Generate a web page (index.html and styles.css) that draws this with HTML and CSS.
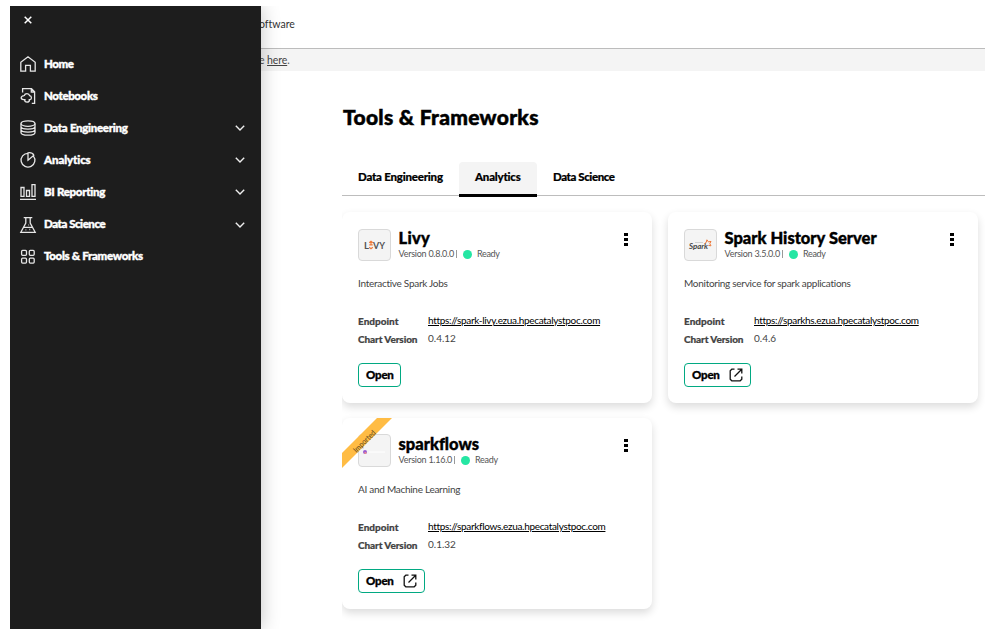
FILE: index.html
```html
<!DOCTYPE html>
<html lang="en">
<head>
<meta charset="utf-8">
<title>Tools &amp; Frameworks</title>
<link rel="stylesheet" href="styles.css">
</head>
<body>
<svg width="0" height="0" class="defs">
  <symbol id="chev" viewBox="0 0 10 6"><path d="M.8 .8L5 5 9.2 .8"/></symbol>
  <symbol id="ext" viewBox="0 0 14 14"><path d="M5.5 1.2H2.8L1.2 2.8V11.2L2.8 12.8H11.2L12.8 11.2V8.5M8.5 1.2h4.3v4.3M12.5 1.5L5.5 8.5"/></symbol>
</svg>
<div class="frame">
  <nav class="sidebar">
    <div class="close"><svg width="8" height="8" viewBox="0 0 8 8"><path d="M.7 .7l6.6 6.6M7.3 .7L.7 7.3"/></svg></div>
    <ul class="menu">
      <li><svg class="ico" viewBox="0 0 16 16"><path d="M.8 6.2L8 .8l7.2 5.4V15.2H10.4V9.4H5.6V15.2H.8z"/></svg><span class="m-home">Home</span></li>
      <li><svg class="ico" viewBox="0 0 16 16"><path d="M2.6 4.5V.7H11.5L14.6 3.8V15.3H11.8M11.3 .7V4H14.6M4.2 7.7C5 5 9 5 9.6 7.7C12 8 12 11.4 9.8 11.6H8.6M5.6 11.6H3.6C.4 11.4.2 8.2 4.2 7.7M4.6 11.6C4.6 15 9.4 15 9.6 11.6"/></svg><span class="m-note">Notebooks</span></li>
      <li><svg class="ico" viewBox="0 0 16 16"><ellipse cx="8" cy="3.6" rx="7" ry="2.7"/><path d="M1 3.6V12.4C1 16 15 16 15 12.4V3.6M1 6.6C1 10 15 10 15 6.6M1 9.6C1 13 15 13 15 9.6"/></svg><span class="m-eng">Data Engineering</span><svg class="chev"><use href="#chev"/></svg></li>
      <li><svg class="ico" viewBox="0 0 16 16"><path d="M8 1.3A6.9 6.9 0 1 0 13.3 3.8L8 8.2z M8 1.3V.8C10.5 .4 13 1.6 13.9 3.2L8 8.2"/></svg><span class="m-ana">Analytics</span><svg class="chev"><use href="#chev"/></svg></li>
      <li><svg class="ico" viewBox="0 0 16 16"><path d="M0 15.3H16M1 3.5H4V12.4H1zM6.5 6.5H9.5V12.4H6.5zM12 .7H15V12.4H12z"/></svg><span class="m-bi">BI Reporting</span><svg class="chev"><use href="#chev"/></svg></li>
      <li><svg class="ico" viewBox="0 0 16 16"><path d="M3.7 .7H12.3M5.8 .7V6L.8 15.3H15.2L10.2 6V.7M3.4 10.3H12.4M5.5 12.9h.8M9.4 12.5h.8M8.5 8h.6"/></svg><span class="m-sci">Data Science</span><svg class="chev"><use href="#chev"/></svg></li>
      <li><svg class="ico" viewBox="0 0 16 16"><rect x="1.6" y="1.4" width="4.9" height="4.9" rx="1"/><rect x="9.3" y="1.4" width="4.9" height="4.9" rx="1"/><rect x="1.6" y="9.2" width="4.9" height="4.9" rx="1"/><rect x="9.3" y="9.2" width="4.9" height="4.9" rx="1"/></svg><span class="m-tools">Tools &amp; Frameworks</span></li>
    </ul>
  </nav>
  <main class="main">
    <header class="topbar"><span>oftware</span></header>
    <div class="notice"><span>e <a>here</a>.</span></div>
    <div class="content">
      <h1>Tools &amp; Frameworks</h1>
      <div class="tabs">
        <div class="tab t1"><span>Data Engineering</span></div>
        <div class="tab active"><span>Analytics</span></div>
        <div class="tab t3"><span>Data Science</span></div>
      </div>
      <div class="cards">
        <section class="card">
          <div class="head">
            <div class="logo"><svg width="30" height="30" viewBox="0 0 30 30"><text class="livy" x="5" y="19" textLength="5" lengthAdjust="spacingAndGlyphs">L</text><text class="livy" x="14" y="19" textLength="12" lengthAdjust="spacingAndGlyphs">VY</text><path class="orange" d="M10.2 12.8L12 11.3l1.8 1.5M12 11.5v3M10.2 17.2L12 18.7l1.8-1.5M10.3 14.8h3.4"/></svg></div>
            <div class="title"><h2 class="h-livy">Livy</h2><div class="meta"><span class="ver v1">Version 0.8.0.0</span><i class="bar"></i><i class="dot"></i><span class="ready">Ready</span></div></div>
            <svg class="more" viewBox="0 0 4 13"><path d="M0 0h4v3H0zM0 5h4v3H0zM0 10h4v3H0z"/></svg>
          </div>
          <p class="desc d1">Interactive Spark Jobs</p>
          <dl><dt class="ep">Endpoint</dt><dd><a class="u1">https://spark-livy.ezua.hpecatalystpoc.com</a></dd><dt class="cv">Chart Version</dt><dd>0.4.12</dd></dl>
          <div class="open"><span>Open</span></div>
        </section>
        <section class="card">
          <div class="head">
            <div class="logo"><svg width="30" height="30" viewBox="0 0 30 30"><text class="spark" x="4" y="19" textLength="19" lengthAdjust="spacingAndGlyphs">Spark</text><path class="orange thin" d="M19.5 13.5l1.7-1 .7-2.7 1.5 2.1 2.6-.5-1.2 2.3 1.2 2.1-2.6-.4"/><path class="faint" d="M10 12.5h8"/></svg></div>
            <div class="title"><h2 class="h-spark">Spark History Server</h2><div class="meta"><span class="ver v1">Version 3.5.0.0</span><i class="bar"></i><i class="dot"></i><span class="ready">Ready</span></div></div>
            <svg class="more" viewBox="0 0 4 13"><path d="M0 0h4v3H0zM0 5h4v3H0zM0 10h4v3H0z"/></svg>
          </div>
          <p class="desc d2">Monitoring service for spark applications</p>
          <dl><dt class="ep">Endpoint</dt><dd><a class="u2">https://sparkhs.ezua.hpecatalystpoc.com</a></dd><dt class="cv">Chart Version</dt><dd>0.4.6</dd></dl>
          <div class="open wide"><span>Open</span><svg><use href="#ext"/></svg></div>
        </section>
        <section class="card third">
          <div class="head">
            <div class="logo"><svg width="30" height="30" viewBox="0 0 30 30"><circle cx="6" cy="17" r="2" fill="#9a5bd0"/><circle cx="6.4" cy="18" r="1.1" fill="#f08a90"/><path d="M10 17h16" stroke="#fff"/></svg></div>
            <div class="title"><h2 class="h-flows">sparkflows</h2><div class="meta"><span class="ver v3">Version 1.16.0</span><i class="bar"></i><i class="dot"></i><span class="ready">Ready</span></div></div>
            <svg class="more" viewBox="0 0 4 13"><path d="M0 0h4v3H0zM0 5h4v3H0zM0 10h4v3H0z"/></svg>
          </div>
          <svg class="ribbon" viewBox="0 0 50 50"><path d="M35 0H50L0 50V35z"/><text x="22" y="26.3" text-anchor="middle" textLength="28" lengthAdjust="spacingAndGlyphs" transform="rotate(-45 22 23)">Imported</text></svg>
          <p class="desc d3">AI and Machine Learning</p>
          <dl><dt class="ep">Endpoint</dt><dd><a class="u3">https://sparkflows.ezua.hpecatalystpoc.com</a></dd><dt class="cv">Chart Version</dt><dd>0.1.32</dd></dl>
          <div class="open wide"><span>Open</span><svg><use href="#ext"/></svg></div>
        </section>
      </div>
    </div>
  </main>
</div>
</body>
</html>
```
FILE: styles.css
```css
* { box-sizing: border-box; margin: 0; padding: 0; }
body { background: #fff; font-family: Lato, "Liberation Sans", sans-serif; font-variant-ligatures: none; overflow: hidden; }
.defs { display: block; height: 0; }
svg { display: block; fill: none; overflow: visible; }
.frame { margin: 6px 0 0 10px; width: 975px; height: 623px; display: grid; grid-template-columns: 251px 724px; overflow: hidden; }

.sidebar { background: #1d1d1d; color: #fff; box-shadow: 0 0 18px rgba(0,0,0,.24); position: relative; z-index: 2; }
.close { height: 42px; padding: 10px 0 0 14px; }
.close svg { stroke: #fff; stroke-width: 1.5; }
.menu { list-style: none; }
.menu li { height: 32.1px; display: flex; align-items: center; padding: 0 16px 0 10px; font-size: 11.5px; font-weight: 900; white-space: nowrap; }
.menu li span { margin-left: 8px; padding-bottom: 2px; letter-spacing: -.3px; -webkit-text-stroke: .4px #fff; }
.menu .m-home { letter-spacing: -.45px; }
.menu .m-note { letter-spacing: -.38px; }
.menu .m-ana { letter-spacing: -.1px; }
.menu .m-sci { letter-spacing: -.45px; }
.ico { width: 16px; height: 16px; stroke: #e6e6e6; stroke-width: 1.3; }
.chev { width: 10px; height: 6px; margin-left: auto; stroke: #eee; stroke-width: 1.4; }

.main { min-width: 0; white-space: nowrap; }
.topbar { height: 43px; border-bottom: 1px solid #bcbcbc; padding-top: 10px; font-size: 10.5px; line-height: 16px; color: #333; }
.topbar span { margin-left: -2px; }
.notice { height: 22px; background: #f4f4f4; font-size: 10.5px; line-height: 22px; color: #555; }
.notice span { margin-left: -2px; letter-spacing: -.1px; }
.notice a { color: #444; text-decoration: underline; }
.content { margin-left: 81px; }
h1 { font-size: 21px; line-height: 28px; padding: 32px 0 0 1px; height: 91px; font-weight: 900; color: #000; letter-spacing: .3px; -webkit-text-stroke: .5px #000; }
.tabs { display: flex; height: 35px; background: linear-gradient(#bdbdbd, #bdbdbd) 0 33px / 100% 1px no-repeat; font-size: 11.5px; font-weight: 900; line-height: 30px; letter-spacing: -.22px; -webkit-text-stroke: .2px #000; }
.tab { padding-left: 16px; height: 35px; }
.t1 { width: 117px; }
.t3 { letter-spacing: -.42px; }
.active { width: 78px; background: #f4f4f4; border-bottom: 3px solid #000; border-radius: 4px 4px 0 0; }

.cards { display: grid; grid-template-columns: 310px 310px; grid-template-rows: 191px 191px; gap: 15px 16px; padding: 15px 0 20px; overflow: hidden; }
.card { position: relative; border-radius: 8px; padding: 17px 16px 0; background: #fff; box-shadow: 0 4px 8px rgba(0,0,0,.14); }
.head { display: flex; height: 33px; }
.logo { width: 33px; height: 32px; background: #f4f4f4; border: 1px solid #d9d9d9; border-radius: 4px; }
.third .logo { height: 33px; margin-top: -1px; }
.title { margin-left: 7.5px; }
h2 { font-size: 16.5px; line-height: 19px; height: 18px; font-weight: 900; color: #000; -webkit-text-stroke: .4px #000; }
.h-livy { letter-spacing: .3px; }
.meta { display: flex; align-items: center; height: 14px; font-size: 9px; line-height: 14px; color: #555; }
.ver { letter-spacing: -.25px; }
.bar { width: 1px; height: 8px; background: #999; margin: 0 6px 0 2px; }
.dot { width: 9px; height: 9px; border-radius: 50%; background: #25e6a3; margin-right: 5px; }
.ready { letter-spacing: -.3px; }
.more { width: 4px; height: 13px; fill: #000; margin: 4px 8px 0 auto; }
.livy { font: 700 10px Lato, sans-serif; fill: #555; }
.spark { font: italic 700 8px Lato, sans-serif; fill: #444; }
.orange { stroke: #ee7a3b; stroke-width: 1.2; }
.thin { stroke-width: 1; }
.faint { stroke: #bbb; stroke-width: .6; }
.desc { margin-top: 13px; height: 16px; line-height: 16px; font-size: 10px; color: #444; letter-spacing: -.28px; }
dl { display: grid; grid-template-columns: 70px auto; grid-template-rows: 18px 18px; margin-top: 21px; font-size: 10px; line-height: 18px; color: #444; }
dt { font-weight: 900; -webkit-text-stroke: .2px #444; }
.cv { letter-spacing: -.1px; }
dd { line-height: 17px; }
dd a { color: #000; text-decoration: underline; letter-spacing: -.32px; }
.open { margin-top: 15px; height: 24px; width: 43px; padding-left: 7px; border: 1px solid #01a982; border-radius: 4px; display: flex; align-items: center; font-size: 11.5px; font-weight: 900; color: #000; }
.open span { padding-bottom: 2px; letter-spacing: -.2px; -webkit-text-stroke: .3px #000; }
.open.wide { width: 67px; }
.open svg { width: 14px; height: 14px; margin-left: 9px; stroke: #111; stroke-width: 1.3; }
.ribbon { position: absolute; left: 0; top: 0; width: 50px; height: 50px; fill: #ffbc44; }
.ribbon text { font-size: 8px; fill: #604820; }
```
